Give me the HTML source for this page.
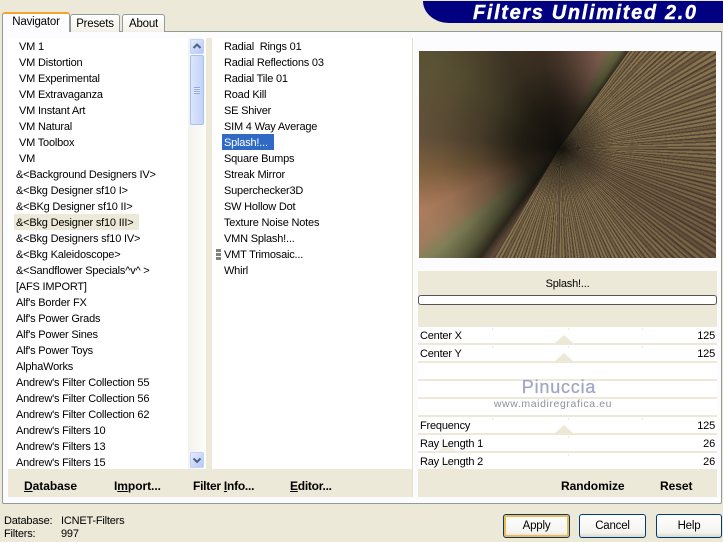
<!DOCTYPE html>
<html><head><meta charset="utf-8"><style>
html,body{margin:0;padding:0}
body{width:723px;height:542px;background:#ece9d8;position:relative;overflow:hidden;font-family:"Liberation Sans",sans-serif;font-size:11px;letter-spacing:-.2px;color:#000}
div{position:absolute;box-sizing:border-box}
.t{white-space:nowrap;line-height:16px;height:16px;margin-top:1px}
.b{font-weight:bold;font-size:12px;letter-spacing:-.05px;white-space:nowrap;line-height:16px}
.row{left:418px;width:299px;height:16px;background:#fff}
.sep{left:418px;width:299px;height:2px;background:#ece9d8}
.btn{top:514px;height:24px;width:67px;border:1px solid #003c74;border-radius:3px;background:linear-gradient(#fff,#f4f3ee 80%,#dcd8c8);text-align:center;line-height:22px;font-size:11.5px}
.tick{width:1px;height:2px;background:#ece9d8}
.tri{width:0;height:0;border-left:9px solid transparent;border-right:9px solid transparent;border-bottom:8px solid #ece9d8}
.tab{border:1px solid #919b9c;border-bottom:0;border-radius:3px 3px 0 0;background:linear-gradient(#fff,#f3f1e6);text-align:center;line-height:18px;font-size:11.5px}
.w{left:0;top:0;width:297px;height:207px;clip-path:polygon(141px 97px,210px 0,297px 0,297px 207px,74px 207px)}
</style></head><body>

<!-- header -->
<div style="left:423px;top:1px;width:300px;height:22px;background:#000080;border-radius:0 0 0 26px/0 0 0 22px"></div>
<div style="left:473px;top:2px;height:22px;line-height:22px;color:#fff;font-weight:bold;font-style:italic;font-size:20px;letter-spacing:1.65px;-webkit-text-stroke:.4px #fff;white-space:nowrap">Filters Unlimited 2.0</div>

<!-- panel -->
<div style="left:2px;top:31px;width:720px;height:473px;background:#fcfcfe;border:1px solid #919b9c;border-radius:0 0 2px 2px"></div>
<div class="tab" style="left:70px;top:14px;width:50px;height:18px">Presets</div>
<div class="tab" style="left:122px;top:14px;width:43px;height:18px">About</div>
<div class="tab" style="left:2px;top:12px;width:68px;height:20px;background:#fcfcfe;border-top:2px solid #f2a52a;border-bottom:0;line-height:17px;z-index:2">Navigator</div>

<!-- beige inner frame -->
<div style="left:8px;top:38px;width:404px;height:459px;background:#fff"></div>
<div style="left:188px;top:38px;width:18px;height:431px;background:linear-gradient(90deg,#f3f2ec,#fdfdfb)"></div>
<div style="left:206px;top:38px;width:6px;height:431px;background:#ece9d8"></div>
<div style="left:8px;top:469px;width:404px;height:28px;background:#ece9d8"></div>
<div style="left:412px;top:38px;width:1px;height:459px;background:#e4e1d0"></div>

<!-- scrollbar -->
<div style="left:190px;top:39px;width:14px;height:15px;background:linear-gradient(135deg,#e4ebfb,#b4c8f6);border:1px solid #c3d3f8;border-radius:2px"></div>
<svg style="position:absolute;left:190px;top:39px" width="14" height="15"><path d="M3.5 9 L7 5.5 L10.5 9" fill="none" stroke="#4d6185" stroke-width="2"/></svg>
<div style="left:190px;top:55px;width:14px;height:70px;background:linear-gradient(90deg,#dbe5fb,#c3d4f9);border:1px solid #a9c0f2;border-radius:2px"></div>
<div style="left:194px;top:87px;width:6px;height:7px;background:repeating-linear-gradient(#8ea8e0 0 1px,#e6edfd 1px 2px)"></div>
<div style="left:190px;top:452px;width:14px;height:16px;background:linear-gradient(135deg,#e4ebfb,#b4c8f6);border:1px solid #c3d3f8;border-radius:2px"></div>
<svg style="position:absolute;left:190px;top:452px" width="14" height="16"><path d="M3.5 6.5 L7 10 L10.5 6.5" fill="none" stroke="#4d6185" stroke-width="2"/></svg>

<!-- list 1 -->
<div style="left:14px;top:214px;width:125px;height:16px;background:#ece9d8"></div>
<div class="t" style="left:19px;top:38px">VM 1</div>
<div class="t" style="left:19px;top:54px">VM Distortion</div>
<div class="t" style="left:19px;top:70px">VM Experimental</div>
<div class="t" style="left:19px;top:86px">VM Extravaganza</div>
<div class="t" style="left:19px;top:102px">VM Instant Art</div>
<div class="t" style="left:19px;top:118px">VM Natural</div>
<div class="t" style="left:19px;top:134px">VM Toolbox</div>
<div class="t" style="left:19px;top:150px">VM</div>
<div class="t" style="left:16px;top:166px">&amp;&lt;Background Designers IV&gt;</div>
<div class="t" style="left:16px;top:182px">&amp;&lt;Bkg Designer sf10 I&gt;</div>
<div class="t" style="left:16px;top:198px">&amp;&lt;BKg Designer sf10 II&gt;</div>
<div class="t" style="left:16px;top:214px">&amp;&lt;Bkg Designer sf10 III&gt;</div>
<div class="t" style="left:16px;top:230px">&amp;&lt;Bkg Designers sf10 IV&gt;</div>
<div class="t" style="left:16px;top:246px">&amp;&lt;Bkg Kaleidoscope&gt;</div>
<div class="t" style="left:16px;top:262px">&amp;&lt;Sandflower Specials^v^ &gt;</div>
<div class="t" style="left:16px;top:278px">[AFS IMPORT]</div>
<div class="t" style="left:16px;top:294px">Alf's Border FX</div>
<div class="t" style="left:16px;top:310px">Alf's Power Grads</div>
<div class="t" style="left:16px;top:326px">Alf's Power Sines</div>
<div class="t" style="left:16px;top:342px">Alf's Power Toys</div>
<div class="t" style="left:16px;top:358px">AlphaWorks</div>
<div class="t" style="left:16px;top:374px">Andrew's Filter Collection 55</div>
<div class="t" style="left:16px;top:390px">Andrew's Filter Collection 56</div>
<div class="t" style="left:16px;top:406px">Andrew's Filter Collection 62</div>
<div class="t" style="left:16px;top:422px">Andrew's Filters 10</div>
<div class="t" style="left:16px;top:438px">Andrew's Filters 13</div>
<div class="t" style="left:16px;top:454px">Andrew's Filters 15</div>

<!-- list 2 -->
<div style="left:222px;top:134px;width:52px;height:16px;background:#316ac5"></div>
<div class="t" style="left:224px;top:38px">Radial&nbsp; Rings 01</div>
<div class="t" style="left:224px;top:54px">Radial Reflections 03</div>
<div class="t" style="left:224px;top:70px">Radial Tile 01</div>
<div class="t" style="left:224px;top:86px">Road Kill</div>
<div class="t" style="left:224px;top:102px">SE Shiver</div>
<div class="t" style="left:224px;top:118px">SIM 4 Way Average</div>
<div class="t" style="left:224px;top:134px;color:#fff">Splash!...</div>
<div class="t" style="left:224px;top:150px">Square Bumps</div>
<div class="t" style="left:224px;top:166px">Streak Mirror</div>
<div class="t" style="left:224px;top:182px">Superchecker3D</div>
<div class="t" style="left:224px;top:198px">SW Hollow Dot</div>
<div class="t" style="left:224px;top:214px">Texture Noise Notes</div>
<div class="t" style="left:224px;top:230px">VMN Splash!...</div>
<div class="t" style="left:224px;top:246px">VMT Trimosaic...</div>
<div class="t" style="left:224px;top:262px">Whirl</div>
<div style="left:216px;top:249px;width:5px;height:11px;background:repeating-linear-gradient(#808080 0 3px,#fff 3px 4px)"></div>

<!-- preview -->
<div style="left:419px;top:51px;width:297px;height:207px;overflow:hidden;background:#4a4030">
  <div style="left:0;top:0;width:297px;height:207px;background:conic-gradient(from 0deg at 141px 97px,#5a4234 0deg,#7c5a4a 12deg,#9a7262 24deg,#7c7a50 29deg,#6c6e44 32deg,#3c3428 35deg,#3c3428 208deg,#6a5040 212deg,#2e2a1e 216deg,#5a5c3c 222deg,#7f8058 230deg,#a07c5c 236deg,#ac7c5c 246deg,#84643f 260deg,#64523a 275deg,#5a5234 305deg,#463a28 330deg,#483628 350deg,#5a4234 360deg)"></div>
  <div style="left:0;top:0;width:297px;height:207px;background:radial-gradient(circle 150px at 141px 97px,rgba(16,14,10,1) 0,rgba(22,20,14,.85) 40px,rgba(30,26,18,.42) 80px,rgba(40,32,22,.12) 120px,rgba(40,32,22,0) 150px)"></div>
  <div class="w" style="background:repeating-conic-gradient(from 0deg at 141px 97px,#84764e 0deg .95deg,#5c4638 .95deg 1.6deg)"></div>
  <div class="w" style="background:repeating-conic-gradient(from 0deg at 141px 97px,rgba(60,40,34,.3) 0deg 1.1deg,rgba(60,40,34,0) 1.1deg 4.3deg)"></div>
  <div class="w" style="background:conic-gradient(from 0deg at 141px 97px,rgba(50,35,30,0) 35deg,rgba(50,35,30,.05) 90deg,rgba(60,36,34,.3) 118deg,rgba(50,35,30,.05) 145deg,rgba(50,35,30,0) 212deg)"></div>
  <div class="w" style="background:radial-gradient(circle 55px at 141px 97px,rgba(16,14,10,.98) 0,rgba(30,26,18,.55) 20px,rgba(30,26,18,0) 55px)"></div>
</div>

<!-- right panel -->
<div style="left:418px;top:271px;width:299px;height:56px;background:#ece9d8"></div>
<div class="t" style="left:418px;top:275px;width:299px;text-align:center">Splash!...</div>
<div style="left:418px;top:295px;width:299px;height:10px;background:#fff;border:1px solid #555;border-radius:3px"></div>

<div class="row" style="top:327px"></div><div class="sep" style="top:343px"></div>
<div class="row" style="top:345px"></div><div class="sep" style="top:361px"></div>
<div class="row" style="top:363px"></div><div class="sep" style="top:379px"></div>
<div class="row" style="top:381px"></div><div class="sep" style="top:397px"></div>
<div class="row" style="top:399px"></div><div class="sep" style="top:415px"></div>
<div class="row" style="top:417px"></div><div class="sep" style="top:433px"></div>
<div class="row" style="top:435px"></div><div class="sep" style="top:451px"></div>
<div class="row" style="top:453px"></div>

<div class="tick" style="left:568px;top:328px"></div><div class="tick" style="left:568px;top:346px"></div>
<div class="tick" style="left:568px;top:418px"></div><div class="tick" style="left:568px;top:436px"></div><div class="tick" style="left:568px;top:454px"></div>
<div class="tick" style="left:492px;top:328px"></div><div class="tick" style="left:642px;top:328px"></div>
<div class="tick" style="left:492px;top:346px"></div><div class="tick" style="left:642px;top:346px"></div>
<div class="tick" style="left:492px;top:418px"></div><div class="tick" style="left:642px;top:418px"></div>
<div class="tri" style="left:555px;top:335px"></div>
<div class="tri" style="left:555px;top:353px"></div>
<div class="tri" style="left:555px;top:425px"></div>
<div class="tri" style="left:438px;top:443px;opacity:.7"></div>
<div class="tri" style="left:438px;top:461px;opacity:.7"></div>

<div class="t" style="left:420px;top:327px">Center X</div><div class="t" style="right:8px;top:327px">125</div>
<div class="t" style="left:420px;top:345px">Center Y</div><div class="t" style="right:8px;top:345px">125</div>
<div class="t" style="left:420px;top:417px">Frequency</div><div class="t" style="right:8px;top:417px">125</div>
<div class="t" style="left:420px;top:435px">Ray Length 1</div><div class="t" style="right:8px;top:435px">26</div>
<div class="t" style="left:420px;top:453px">Ray Length 2</div><div class="t" style="right:8px;top:453px">26</div>

<div style="left:418px;top:376px;width:282px;text-align:center;color:#a2a6c6;font-size:18px;letter-spacing:.8px;-webkit-text-stroke:.3px #a2a6c6;line-height:22px;white-space:nowrap">Pinuccia</div>
<div style="left:418px;top:397px;width:270px;text-align:center;color:#8e8e9e;font-size:10.5px;letter-spacing:.6px;line-height:14px;white-space:nowrap">www.maidiregrafica.eu</div>

<div style="left:418px;top:469px;width:299px;height:28px;background:#ece9d8"></div>
<div class="b" style="left:561px;top:478px">Randomize</div>
<div class="b" style="left:660px;top:478px">Reset</div>

<!-- bottom bar -->
<div class="b" style="left:24px;top:478px"><u>D</u>atabase</div>
<div class="b" style="left:114px;top:478px">I<u>m</u>port...</div>
<div class="b" style="left:193px;top:478px;letter-spacing:-.25px">Filter <u>I</u>nfo...</div>
<div class="b" style="left:290px;top:478px;letter-spacing:-.25px"><u>E</u>ditor...</div>

<div class="t" style="left:4px;top:512px">Database:</div>
<div class="t" style="left:61px;top:512px">ICNET-Filters</div>
<div class="t" style="left:4px;top:525px">Filters:</div>
<div class="t" style="left:61px;top:525px">997</div>

<div class="btn" style="left:503px;box-shadow:inset 0 0 0 2px #f5b84e">Apply</div>
<div class="btn" style="left:579px">Cancel</div>
<div class="btn" style="left:656px;width:66px">Help</div>
</body></html>
